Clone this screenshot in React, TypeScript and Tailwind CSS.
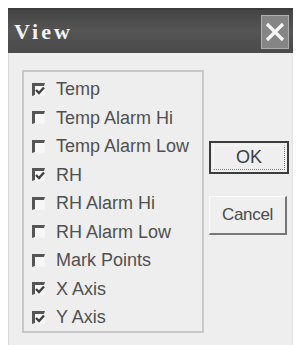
const items: { label: string; checked: boolean }[] = [
  { label: "Temp", checked: true },
  { label: "Temp Alarm Hi", checked: false },
  { label: "Temp Alarm Low", checked: false },
  { label: "RH", checked: true },
  { label: "RH Alarm Hi", checked: false },
  { label: "RH Alarm Low", checked: false },
  { label: "Mark Points", checked: false },
  { label: "X Axis", checked: true },
  { label: "Y Axis", checked: true },
];

const Check: React.FC<{ checked: boolean }> = ({ checked }) => (
  <span className="relative block h-[13px] w-[13px] border-l-[3px] border-t-[3px] border-b border-r border-l-[#555] border-t-[#555] border-b-[#f4f4f4] border-r-[#f4f4f4] bg-[#f7f7f7]">
    {checked && (
      <svg className="absolute left-[0px] top-[0px]" width="10" height="9" viewBox="0 0 10 9">
        <path d="M1 4 L4 7 L9 1.5" stroke="#404040" strokeWidth="2.4" fill="none" />
      </svg>
    )}
  </span>
);

export default function App() {
  return (
    <div className="h-[345px] w-[301px] overflow-hidden bg-white px-[8px] pt-[8px] font-['Liberation_Sans',Arial,sans-serif]">
      <div className="flex h-[45px] items-center justify-between border-t-2 border-t-[#3c3c3c] bg-gradient-to-b from-[#444] via-[#555] to-[#4a4a4a] pl-[6px] pr-[4px]">
        <span className="font-['Liberation_Serif',serif] text-[22px] font-bold leading-none tracking-[3px] text-[#f2f2f2]">
          View
        </span>
        <span className="flex h-[34px] w-[28px] items-center justify-center border border-[#b0b0b0] bg-[#858585]">
          <svg width="20" height="20" viewBox="0 0 20 20">
            <path d="M2 2 L18 18 M18 2 L2 18" stroke="#f6f6f6" strokeWidth="3.2" />
          </svg>
        </span>
      </div>
      <div className="flex h-[292px] border-l border-r border-l-[#d8d8d8] border-r-[#e2e2e2] bg-[#eeeeee] pl-[13px] pt-[17px]">
        <div className="h-[263px] w-[182px] border-2 border-[#c8c8c8] pl-[8px] pt-[3px]">
          {items.map((it) => (
            <div key={it.label} className="flex h-[28.5px] items-center gap-[11px]">
              <Check checked={it.checked} />
              <span className="text-[18px] leading-none text-[#505050]">{it.label}</span>
            </div>
          ))}
        </div>
        <div className="flex flex-col pl-[5px] pt-[71px]">
          <div className="h-[33px] w-[80px] border-2 border-[#3c3c3c] bg-[#efefef] p-[2px]">
            <div className="flex h-full w-full items-center justify-center border border-dotted border-b-[#777] border-l-[#fff] border-r-[#777] border-t-[#fff] text-[18px] text-[#3e3e3e]">
              OK
            </div>
          </div>
          <div className="mt-[22px] flex h-[39px] w-[78px] items-center justify-center border-b-2 border-r-2 border-l border-t border-b-[#777] border-r-[#777] border-l-[#fafafa] border-t-[#fafafa] bg-[#efefef] text-[17px] tracking-[-0.3px] text-[#4a4a4a]">
            Cancel
          </div>
        </div>
      </div>
    </div>
  );
}
